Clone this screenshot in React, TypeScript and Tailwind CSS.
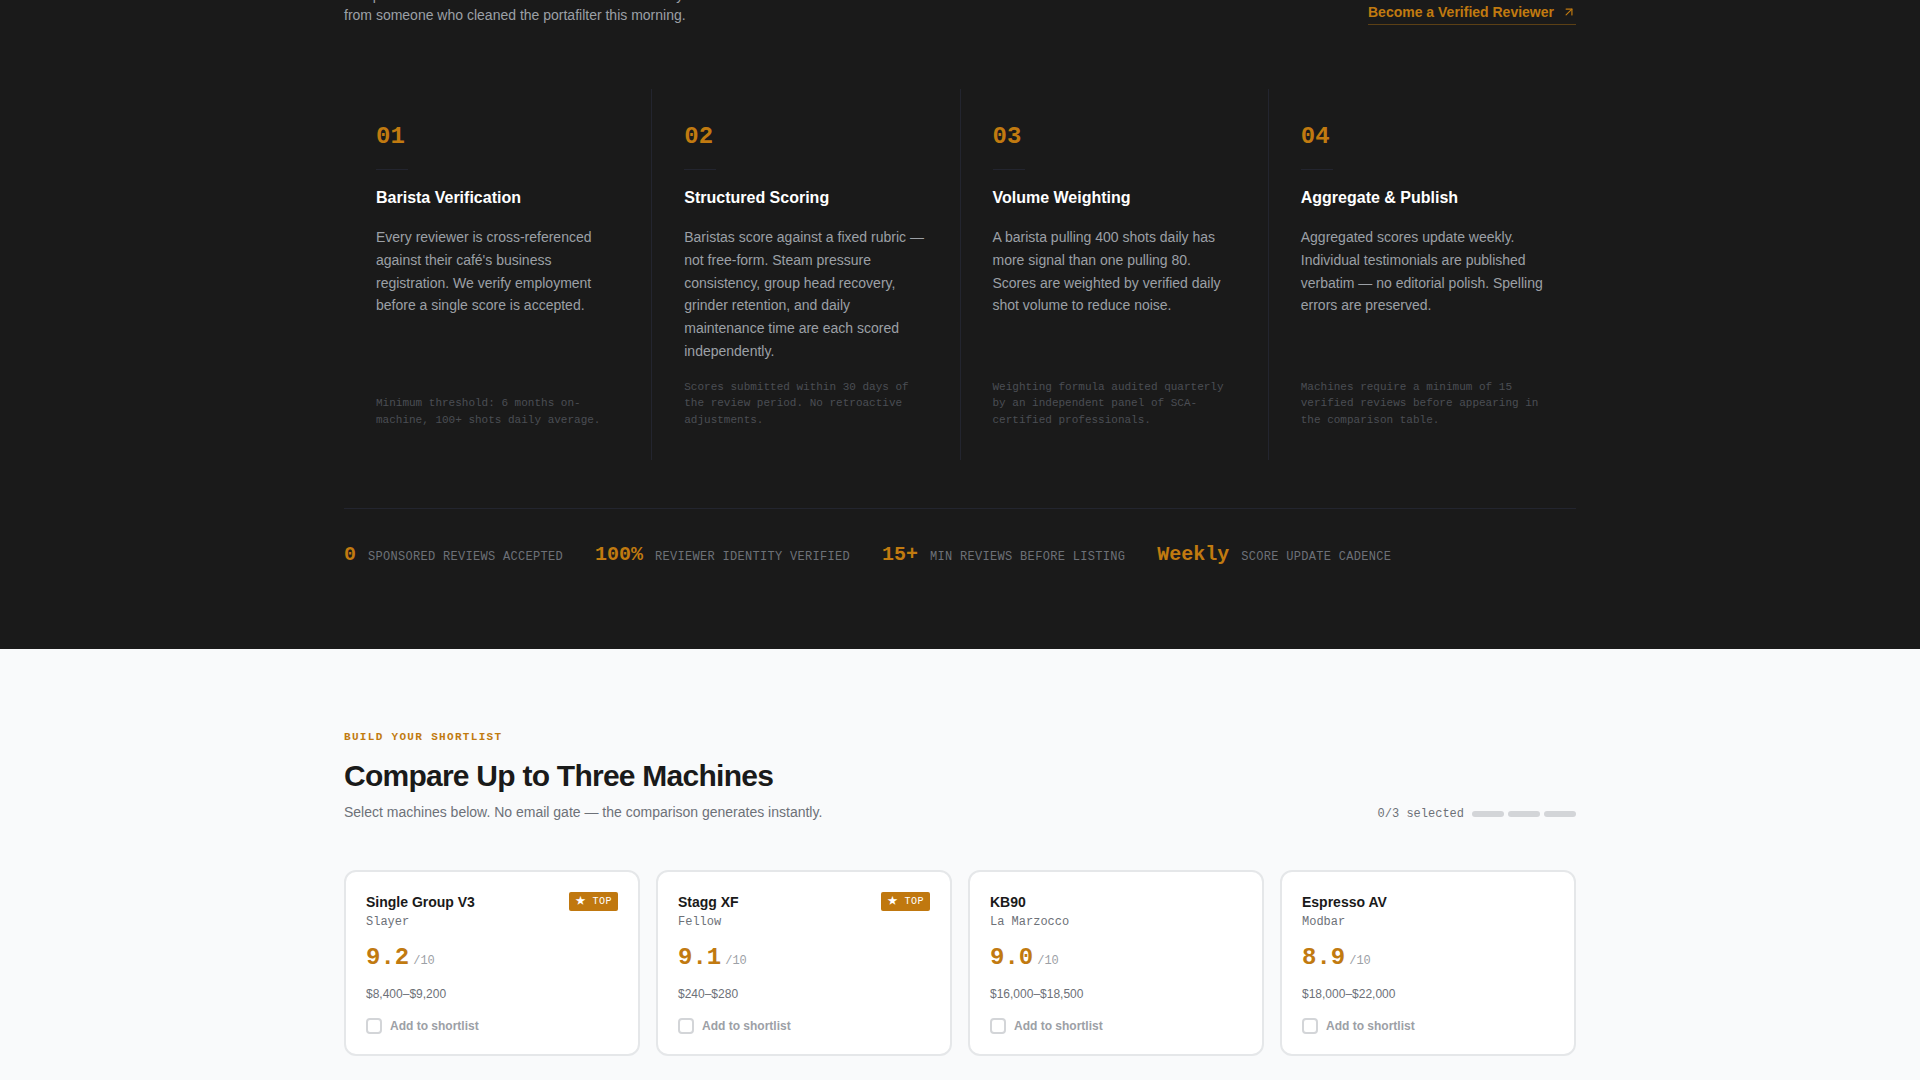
import React, { useState } from 'react';
import { ArrowUpRight } from 'lucide-react';

interface Step {
  number: string;
  title: string;
  body: string;
  note: string;
}

interface Machine {
  id: string;
  name: string;
  brand: string;
  score: string;
  price: string;
  top?: boolean;
}

const MAX_SELECTED = 3;

const steps: Step[] = [
  {
    number: '01',
    title: 'Barista Verification',
    body: "Every reviewer is cross-referenced against their café's business registration. We verify employment before a single score is accepted.",
    note: 'Minimum threshold: 6 months on-machine, 100+ shots daily average.',
  },
  {
    number: '02',
    title: 'Structured Scoring',
    body: 'Baristas score against a fixed rubric — not free-form. Steam pressure consistency, group head recovery, grinder retention, and daily maintenance time are each scored independently.',
    note: 'Scores submitted within 30 days of the review period. No retroactive adjustments.',
  },
  {
    number: '03',
    title: 'Volume Weighting',
    body: 'A barista pulling 400 shots daily has more signal than one pulling 80. Scores are weighted by verified daily shot volume to reduce noise.',
    note: 'Weighting formula audited quarterly by an independent panel of SCA-certified professionals.',
  },
  {
    number: '04',
    title: 'Aggregate & Publish',
    body: 'Aggregated scores update weekly. Individual testimonials are published verbatim — no editorial polish. Spelling errors are preserved.',
    note: 'Machines require a minimum of 15 verified reviews before appearing in the comparison table.',
  },
];

const stats = [
  { value: '0', label: 'Sponsored reviews accepted' },
  { value: '100%', label: 'Reviewer identity verified' },
  { value: '15+', label: 'Min reviews before listing' },
  { value: 'Weekly', label: 'Score update cadence' },
];

const machines: Machine[] = [
  { id: 'slayer', name: 'Single Group V3', brand: 'Slayer', score: '9.2', price: '$8,400–$9,200', top: true },
  { id: 'stagg', name: 'Stagg XF', brand: 'Fellow', score: '9.1', price: '$240–$280', top: true },
  { id: 'kb90', name: 'KB90', brand: 'La Marzocco', score: '9.0', price: '$16,000–$18,500' },
  { id: 'modbar', name: 'Espresso AV', brand: 'Modbar', score: '8.9', price: '$18,000–$22,000' },
];

const StepCard: React.FC<{ step: Step }> = ({ step }) => (
  <div className="flex flex-col gap-4 bg-[#1a1a1a] p-8">
    <span className="font-['Liberation_Mono',monospace] text-2xl font-bold text-[#c17a10]">{step.number}</span>
    <div className="h-px w-8 bg-[#23252f]" />
    <h3 className="text-base font-bold text-white">{step.title}</h3>
    <p className="text-sm leading-relaxed text-[#9ca0a6]">{step.body}</p>
    <p className="mt-auto font-['Liberation_Mono',monospace] text-[11px] leading-normal text-[#4b4e54]">{step.note}</p>
  </div>
);

interface MachineCardProps {
  machine: Machine;
  selected: boolean;
  disabled: boolean;
  onToggle: (id: string) => void;
}

const MachineCard: React.FC<MachineCardProps> = ({ machine, selected, disabled, onToggle }) => (
  <div className={`rounded-xl border-2 bg-white p-5 ${selected ? 'border-[#c17a10]' : 'border-[#e5e7e9]'}`}>
    <div className="mb-3 flex items-start justify-between">
      <div>
        <h3 className="text-sm font-bold text-[#1a1a1a]">{machine.name}</h3>
        <p className="mt-0.5 font-['Liberation_Mono',monospace] text-xs text-[#6d7178]">{machine.brand}</p>
      </div>
      {machine.top && (
        <span className="rounded-xs bg-[#c0780f] px-1.5 py-0.5 font-['Liberation_Mono','Noto_Sans_CJK_JP',monospace] text-[10px] leading-normal tracking-wider text-white">
          ★ TOP
        </span>
      )}
    </div>

    <div className="mb-3 flex items-baseline gap-1 font-['Liberation_Mono',monospace]">
      <span className="text-2xl font-bold text-[#c17a10]">{machine.score}</span>
      <span className="text-xs text-[#9ca0a6]">/10</span>
    </div>

    <p className="mb-4 text-xs text-[#6d7178]">{machine.price}</p>

    <label className="flex items-center gap-2 text-xs font-semibold text-[#9ca0a6]">
      <input
        type="checkbox"
        checked={selected}
        disabled={disabled}
        onChange={() => onToggle(machine.id)}
        className="size-4 appearance-none rounded border-2 border-[#d3d5d8] checked:border-[#c17a10] checked:bg-[#c17a10]"
      />
      Add to shortlist
    </label>
  </div>
);

export default function App() {
  const [selected, setSelected] = useState<string[]>([]);

  const toggle = (id: string) => {
    setSelected((prev) => (prev.includes(id) ? prev.filter((x) => x !== id) : [...prev, id]));
  };

  return (
    <div className="flex min-h-screen flex-col bg-gray-50 font-['Liberation_Sans',Arial,sans-serif]">
      <section className="overflow-hidden bg-[#1a1a1a] pb-20">
        <div className="mx-auto max-w-7xl px-6">
          <div className="-mt-[15px] mb-16 flex items-end justify-between">
            <p className="text-sm text-[#9ca0a6]">
              No sponsored reviews. All of their scores come directly
              <br />
              from someone who cleaned the portafilter this morning.
            </p>
            <a
              href="#verify"
              className="flex items-center gap-2 border-b border-[#c17a10]/40 pb-0.5 text-sm font-semibold text-[#c17a10]"
            >
              Become a Verified Reviewer
              <ArrowUpRight size={14} />
            </a>
          </div>

          <div className="grid grid-cols-4 gap-px bg-[#23252f]">
            {steps.map((step) => (
              <StepCard key={step.number} step={step} />
            ))}
          </div>

          <div className="mt-12 flex flex-wrap gap-8 border-t border-[#23252f] pt-8 font-['Liberation_Mono',monospace]">
            {stats.map((stat) => (
              <div key={stat.label} className="flex items-baseline gap-3">
                <span className="text-xl font-bold text-[#c17a10]">{stat.value}</span>
                <span className="text-xs tracking-wide text-[#6d7178] uppercase">{stat.label}</span>
              </div>
            ))}
          </div>
        </div>
      </section>

      <section className="pt-20 pb-6">
        <div className="mx-auto max-w-7xl px-6">
          <div className="mb-12 flex items-end justify-between">
            <div>
              <p className="mb-3 font-['Liberation_Mono',monospace] text-[11px] leading-normal font-bold tracking-[0.12em] text-[#c17a10] uppercase">
                Build your shortlist
              </p>
              <h2 className="mb-2 text-3xl font-bold tracking-tight text-[#1a1a1a]">Compare Up to Three Machines</h2>
              <p className="text-sm text-[#6d7178]">
                Select machines below. No email gate — the comparison generates instantly.
              </p>
            </div>
            <div className="flex items-center gap-2">
              <span className="font-['Liberation_Mono',monospace] text-xs text-[#6d7178]">
                {selected.length}/{MAX_SELECTED} selected
              </span>
              <div className="flex gap-1">
                {Array.from({ length: MAX_SELECTED }, (_, i) => (
                  <div
                    key={i}
                    className={`h-1.5 w-8 rounded-full ${i < selected.length ? 'bg-[#c17a10]' : 'bg-[#d3d5d8]'}`}
                  />
                ))}
              </div>
            </div>
          </div>

          <div className="grid grid-cols-4 gap-4">
            {machines.map((machine) => (
              <MachineCard
                key={machine.id}
                machine={machine}
                selected={selected.includes(machine.id)}
                disabled={selected.length >= MAX_SELECTED && !selected.includes(machine.id)}
                onToggle={toggle}
              />
            ))}
          </div>
        </div>
      </section>
    </div>
  );
}
